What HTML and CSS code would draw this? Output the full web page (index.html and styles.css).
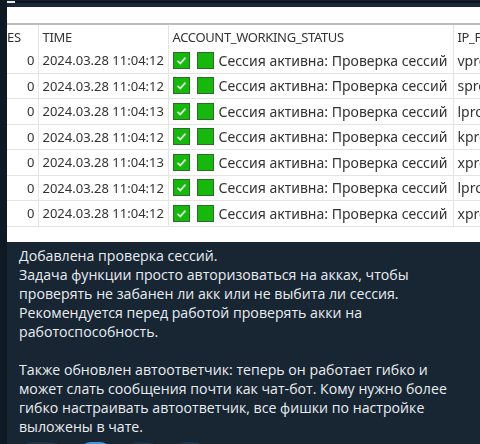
FILE: index.html
```html
<!DOCTYPE html>
<html lang="en">
<head>
  <meta charset="UTF-8">
  <title>Проверка сессий</title>
  <link rel="stylesheet" href="styles.css">
</head>
<body>

<div class="strip"></div>

<div class="main">
  <div class="topbar"><span class="topbar-mark"></span></div>

  <div class="shot">
    <table class="grid">
      <colgroup>
        <col class="col-es">
        <col class="col-time">
        <col class="col-status">
        <col class="col-ip">
      </colgroup>
      <thead>
        <tr>
          <th class="clip-left">ES</th>
          <th>TIME</th>
          <th>ACCOUNT_WORKING_STATUS</th>
          <th>IP_F</th>
        </tr>
      </thead>
      <tbody id="rows"></tbody>
    </table>
  </div>

  <div class="message">
    <p>Добавлена проверка сессий.<br>
    Задача функции просто авторизоваться на акках, чтобы<br>
    проверять не забанен ли акк или не выбита ли сессия.<br>
    Рекомендуется перед работой проверять акки на<br>
    работоспособность.</p>
    <p>Также обновлен автоответчик: теперь он работает гибко и<br>
    может слать сообщения почти как чат-бот. Кому нужно более<br>
    гибко настраивать автоответчик, все фишки по настройке<br>
    выложены в чате.</p>
  </div>

  <div class="chips">
    <span class="chip chip-wide"></span>
    <span class="chip chip-on"></span>
    <span class="chip"></span>
    <span class="chip"></span>
  </div>
</div>

<script>
  const rowData = [
    ['2024.03.28 11:04:12', 'vpro'],
    ['2024.03.28 11:04:12', 'spro'],
    ['2024.03.28 11:04:13', 'lpro'],
    ['2024.03.28 11:04:12', 'kpro'],
    ['2024.03.28 11:04:13', 'xpro'],
    ['2024.03.28 11:04:12', 'lpro'],
    ['2024.03.28 11:04:12', 'xpro']
  ];

  const tbody = document.getElementById('rows');
  rowData.forEach(row => {
    const tr = document.createElement('tr');
    tr.innerHTML = `
      <td class="num">0</td>
      <td class="date">${row[0]}</td>
      <td>
        <div class="status">
          <span class="box">
            <svg viewBox="0 0 15 15" width="15" height="15"><path d="M3.5 7.8 L6.3 10.4 L11.5 4.6" fill="none" stroke="#d6f3cf" stroke-width="1.8"/></svg>
          </span>
          <span class="box box-plain"></span>
          <span class="status-text">Сессия активна: Проверка сессий</span>
        </div>
      </td>
      <td class="ip">${row[1]}</td>`;
    tbody.appendChild(tr);
  });
</script>

</body>
</html>
```

FILE: styles.css
```css
html, body {
  margin: 0;
  padding: 0;
}
body {
  display: flex;
  width: 480px;
  height: 444px;
  overflow: hidden;
  background-color: #182533;
  font-family: "Open Sans", sans-serif;
}
.strip {
  flex: none;
  width: 7px;
  background: #0f1923;
}
.main {
  flex: 1;
  min-width: 0;
}
.topbar {
  height: 7px;
  box-sizing: border-box;
  background: linear-gradient(#18222c 0 1px, #0c131b 1px 3px, #1a2838 3px);
}
.topbar-mark {
  display: block;
  width: 8px;
  height: 2px;
  position: relative;
  top: 1px;
  background: #e8e8e8;
}
.shot {
  height: 235px;
  padding-top: 16px;
  box-sizing: border-box;
  background: #fff;
  overflow: hidden;
}
.grid {
  width: 473px;
  table-layout: fixed;
  border-collapse: collapse;
  border-top: 2px solid #bdbdbd;
  font-family: "Noto Sans", sans-serif;
  font-size: 13px;
  color: #333;
  filter: blur(0.35px);
}
.col-es { width: 31px; }
.col-time { width: 130px; }
.col-status { width: 285px; }
.col-ip { width: 27px; }
th, td {
  padding: 0 0 0 4px;
  white-space: nowrap;
  overflow: hidden;
  font-weight: normal;
  text-align: left;
  border-right: 1px solid #e4e4e4;
  border-bottom: 1px solid #e4e4e4;
}
th {
  height: 23px;
  border-bottom: none;
  letter-spacing: -0.35px;
}
td {
  height: 24.5px;
}
.clip-left {
  padding-left: 0;
  direction: rtl;
  padding-right: 2px;
}
td.num {
  text-align: right;
  padding-right: 3px;
}
td.date {
  font-size: 13px;
}
td.ip {
  font-size: 14px;
  border-right: none;
}
.status {
  display: flex;
  align-items: center;
  gap: 6px;
}
.status-text {
  font-size: 14.05px;
  margin-left: -1px;
}
.box {
  flex: none;
  width: 15px;
  height: 15px;
  background: #16b80e;
  border: 1px solid #2f6b2b;
}
.box-plain {
  margin-left: 1px;
}
.box svg {
  display: block;
}
.message {
  padding: 4px 0 0 12px;
  height: 200px;
  box-sizing: border-box;
  font-size: 14.15px;
  line-height: 19px;
  color: #e8edf1;
}
.message p {
  margin: 0 0 19px;
}
.chips {
  display: flex;
  gap: 14px;
  padding-left: 13px;
}
.chip {
  width: 33px;
  height: 24px;
  border-radius: 12px;
  background: #1e3346;
}
.chip-wide {
  width: 43px;
  margin-right: 2px;
}
.chip-on {
  background: #3d9adb;
}
```
